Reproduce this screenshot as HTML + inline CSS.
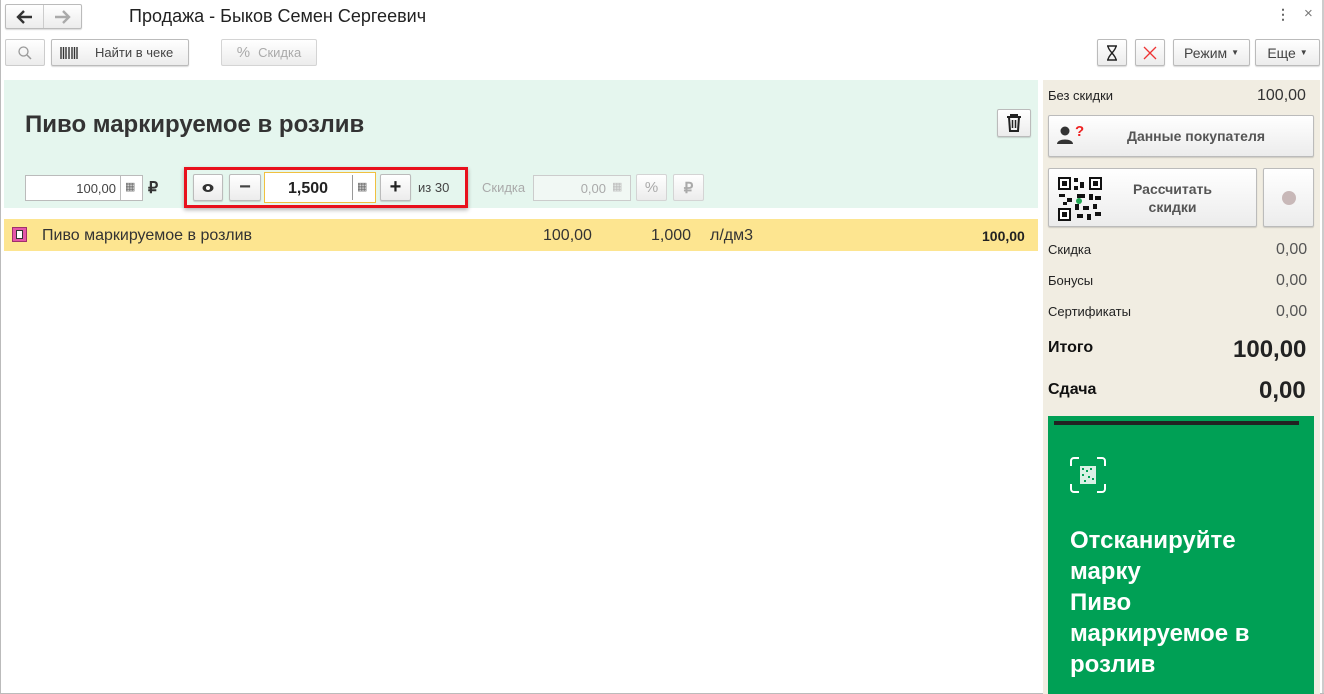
<!DOCTYPE html>
<html><head><meta charset="utf-8"><style>
*{box-sizing:border-box;margin:0;padding:0}
body{width:1324px;height:694px;position:relative;background:#fff;font-family:"Liberation Sans",Arial,sans-serif;color:#333;overflow:hidden}
.a{position:absolute}
.btn{position:absolute;border:1px solid #bbb;border-radius:2px;background:linear-gradient(#fff,#ececec);box-shadow:0 1px 1px rgba(0,0,0,.15);font-size:13px;color:#444;display:flex;align-items:center;justify-content:center}
.dis{color:#aaa;border-color:#d4d4d4;box-shadow:none}
.inp{position:absolute;border:1px solid #bbb;background:#fff;font-size:13px}
.r{text-align:right}
</style></head><body>
<div class="a" style="left:0;top:0;width:1px;height:694px;background:#bbb"></div>
<div class="a" style="right:0;top:0;width:2px;height:694px;background:#ccc"></div>
<div class="a" style="left:0;bottom:0;width:1324px;height:1px;background:#bbb"></div>
<!-- nav -->
<div class="btn" style="left:5px;top:4px;width:77px;height:25px;"></div>
<div class="a" style="left:43px;top:5px;width:1px;height:23px;background:#ccc"></div>
<svg class="a" style="left:16px;top:10px" width="18" height="14"><path d="M2 7h14M8 1L2 7l6 6" fill="none" stroke="#333" stroke-width="2.4"/></svg>
<svg class="a" style="left:53px;top:10px" width="18" height="14"><path d="M2 7h14M10 1l6 6-6 6" fill="none" stroke="#aaa" stroke-width="2.4"/></svg>
<div class="a" style="left:129px;top:6px;font-size:18px;color:#222">Продажа - Быков Семен Сергеевич</div>
<div class="a" style="left:1276px;top:6px;font-size:14px;color:#666;font-weight:bold">⋮</div>
<div class="a" style="left:1304px;top:5px;font-size:15px;color:#777">×</div>
<!-- toolbar -->
<div class="btn" style="left:5px;top:39px;width:40px;height:27px;box-shadow:none;border-color:#ccc">
<svg width="16" height="16"><circle cx="6.5" cy="6.5" r="4.5" fill="none" stroke="#999" stroke-width="1.3"/><path d="M10 10l4 4" stroke="#999" stroke-width="1.5"/></svg></div>
<div class="btn" style="left:51px;top:39px;width:138px;height:27px;justify-content:flex-start;padding-left:8px">
<svg width="20" height="12" style="margin-right:15px"><path d="M1 0v12M3.5 0v12M6 0v12M9 0v12M12 0v12M14.5 0v12M17 0v12" stroke="#333" stroke-width="1.4"/></svg>Найти в чеке</div>
<div class="btn dis" style="left:221px;top:39px;width:96px;height:27px;"><span style="margin-right:8px;font-size:15px">%</span>Скидка</div>
<div class="btn" style="left:1097px;top:39px;width:30px;height:27px;"><svg width="12" height="16"><path d="M1 1h10M1 15h10M2 1c0 5 8 9 8 14M10 1c0 5-8 9-8 14" fill="none" stroke="#222" stroke-width="1.4"/></svg></div>
<div class="btn" style="left:1135px;top:39px;width:30px;height:27px;"><svg width="14" height="14"><path d="M1 1L13 13M13 1L1 13" stroke="#e33" stroke-width="1.3"/></svg></div>
<div class="btn" style="left:1173px;top:39px;width:77px;height:27px;font-size:14px">Режим&nbsp;<span style="font-size:8px">▼</span></div>
<div class="btn" style="left:1255px;top:39px;width:65px;height:27px;font-size:14px">Еще&nbsp;<span style="font-size:8px">▼</span></div>
<!-- green panel -->
<div class="a" style="left:4px;top:80px;width:1034px;height:128px;background:#e5f6ee"></div>
<div class="a" style="left:25px;top:111px;font-size:24px;font-weight:bold;color:#333">Пиво маркируемое в розлив</div>
<div class="btn" style="left:997px;top:109px;width:34px;height:28px;">
<svg width="18" height="20"><path d="M2 4h14M6 4V2h6v2M4 4l1 14h8l1-14" fill="none" stroke="#222" stroke-width="2"/><path d="M7.5 7v8M10.5 7v8" stroke="#222" stroke-width="1.5"/></svg></div>
<div class="inp r" style="left:25px;top:175px;width:118px;height:26px;padding:5px 26px 0 0;color:#444">100,00</div>
<div class="a" style="left:120px;top:176px;width:1px;height:24px;background:#bbb"></div>
<div class="a" style="left:125px;top:180px;font-size:11px;color:#666">▦</div>
<div class="a" style="left:148px;top:178px;font-size:16px;font-weight:bold">₽</div>
<div class="a" style="left:184px;top:167px;width:284px;height:41px;border:3px solid #e8101c;box-shadow:0 2px 4px rgba(0,0,0,.3)"></div>
<div class="btn" style="left:193px;top:174px;width:30px;height:27px;"><svg width="12" height="10"><ellipse cx="6" cy="5" rx="5.5" ry="4" fill="#333"/><circle cx="6" cy="5" r="2" fill="#fff"/></svg></div>
<div class="btn" style="left:229px;top:174px;width:32px;height:27px;font-size:20px;font-weight:bold">−</div>
<div class="inp" style="left:264px;top:172px;width:112px;height:31px;border-color:#f0c040;font-size:16px;font-weight:bold;padding:7px 0 0 23px;color:#222">1,500</div>
<div class="a" style="left:352px;top:175px;width:1px;height:25px;background:#999"></div>
<div class="a" style="left:357px;top:180px;font-size:11px;color:#666">▦</div>
<div class="btn" style="left:380px;top:174px;width:31px;height:27px;font-size:20px;font-weight:bold;color:#222">+</div>
<div class="a" style="left:418px;top:180px;font-size:13px;color:#444">из 30</div>
<div class="a" style="left:482px;top:180px;font-size:13px;color:#aaa">Скидка</div>
<div class="inp r" style="left:533px;top:175px;width:98px;height:26px;border-color:#ccc;background:#f1f8f4;padding:5px 24px 0 0;color:#aaa">0,00</div>
<div class="a" style="left:612px;top:180px;font-size:11px;color:#bbb">▦</div>
<div class="btn dis" style="left:636px;top:174px;width:31px;height:27px;font-size:15px">%</div>
<div class="btn dis" style="left:673px;top:174px;width:31px;height:27px;font-size:15px;font-weight:bold">₽</div>
<!-- row -->
<div class="a" style="left:4px;top:219px;width:1034px;height:32px;background:#fde590"></div>
<div class="a" style="left:12px;top:227px;width:15px;height:15px;background:#e456a8;border:1px solid #a0306c"><div style="margin:2px 3px;width:7px;height:9px;background:#fff;border:1px solid #333"></div></div>
<div class="a" style="left:42px;top:227px;font-size:16px;color:#333">Пиво маркируемое в розлив</div>
<div class="a" style="left:543px;top:227px;font-size:16px">100,00</div>
<div class="a" style="left:651px;top:227px;font-size:16px">1,000</div>
<div class="a" style="left:710px;top:227px;font-size:16px">л/дм3</div>
<div class="a" style="left:982px;top:228px;font-size:14px;font-weight:bold;color:#222">100,00</div>
<!-- right panel -->
<div class="a" style="left:1043px;top:80px;width:277px;height:614px;background:#f1ede2"></div>
<div class="a" style="left:1048px;top:88px;font-size:13px;color:#222">Без скидки</div>
<div class="a" style="left:1257px;top:87px;font-size:16px;color:#333">100,00</div>
<div class="btn" style="left:1048px;top:115px;width:266px;height:42px;font-size:14px;font-weight:bold;color:#555;padding-left:30px">
<span class="a" style="left:7px;top:8px"><svg width="30" height="22"><circle cx="9" cy="7" r="4.5" fill="#333"/><path d="M1 20c0-6 16-6 16 0z" fill="#333"/><text x="19" y="12" font-size="15" fill="#e22" font-family="Liberation Sans">?</text></svg></span>Данные покупателя</div>
<div class="btn" style="left:1048px;top:168px;width:209px;height:59px;font-size:14px;font-weight:bold;color:#555;line-height:18px;text-align:center;padding-left:40px">
<span class="a" style="left:8px;top:7px"><svg width="46" height="46" viewBox="0 0 46 46"><g fill="#111"><rect x="1" y="1" width="13" height="13"/><rect x="32" y="1" width="13" height="13"/><rect x="1" y="32" width="13" height="13"/></g><g fill="#fff"><rect x="3" y="3" width="9" height="9"/><rect x="34" y="3" width="9" height="9"/><rect x="3" y="34" width="9" height="9"/></g><g fill="#111"><rect x="5" y="5" width="5" height="5"/><rect x="36" y="5" width="5" height="5"/><rect x="5" y="36" width="5" height="5"/><rect x="17" y="2" width="4" height="4"/><rect x="23" y="6" width="4" height="6"/><rect x="17" y="10" width="4" height="4"/><rect x="2" y="18" width="6" height="3"/><rect x="10" y="22" width="5" height="4"/><rect x="20" y="18" width="8" height="4"/><rect x="32" y="18" width="4" height="6"/><rect x="38" y="20" width="6" height="4"/><rect x="18" y="28" width="4" height="6"/><rect x="26" y="30" width="6" height="4"/><rect x="36" y="28" width="4" height="5"/><rect x="20" y="38" width="6" height="4"/><rect x="30" y="38" width="4" height="6"/><rect x="38" y="36" width="6" height="4"/><rect x="6" y="26" width="4" height="3"/></g><circle cx="22" cy="25" r="3" fill="#2a5"/></svg></span>Рассчитать<br>скидки</div>
<div class="btn" style="left:1263px;top:168px;width:51px;height:59px;"><div style="width:14px;height:14px;border-radius:50%;background:#c8b8b8"></div></div>
<div class="a" style="left:1048px;top:242px;font-size:13px;color:#222">Скидка</div>
<div class="a" style="left:1276px;top:241px;font-size:16px;color:#555">0,00</div>
<div class="a" style="left:1048px;top:273px;font-size:13px;color:#222">Бонусы</div>
<div class="a" style="left:1276px;top:272px;font-size:16px;color:#555">0,00</div>
<div class="a" style="left:1048px;top:304px;font-size:13px;color:#222">Сертификаты</div>
<div class="a" style="left:1276px;top:303px;font-size:16px;color:#555">0,00</div>
<div class="a" style="left:1048px;top:339px;font-size:16px;font-weight:bold;color:#111">Итого</div>
<div class="a" style="left:1233px;top:336px;font-size:24px;font-weight:bold;color:#222">100,00</div>
<div class="a" style="left:1048px;top:381px;font-size:16px;font-weight:bold;color:#111">Сдача</div>
<div class="a" style="left:1259px;top:377px;font-size:24px;font-weight:bold;color:#222">0,00</div>
<div class="a" style="left:1048px;top:416px;width:266px;height:278px;background:#00a055"></div>
<div class="a" style="left:1054px;top:421px;width:245px;height:4px;background:#222"></div>
<svg class="a" style="left:1069px;top:456px" width="38" height="38" viewBox="0 0 38 38"><path d="M2 10V5a3 3 0 0 1 3-3h5M28 2h5a3 3 0 0 1 3 3v5M36 28v5a3 3 0 0 1-3 3h-5M10 36H5a3 3 0 0 1-3-3v-5" fill="none" stroke="#fff" stroke-width="2"/><rect x="11" y="10" width="16" height="18" fill="#fff" opacity=".85"/><path d="M13 12h2v2h-2zM17 14h2v2h-2zM21 12h2v2h-2zM13 18h2v2h-2zM19 20h2v2h-2zM15 24h2v2h-2zM23 22h2v2h-2z" fill="#00a055"/></svg>
<div class="a" style="left:1070px;top:525px;font-size:24px;font-weight:bold;color:#fff;line-height:31px">Отсканируйте<br>марку<br>Пиво<br>маркируемое в<br>розлив</div>
</body></html>
